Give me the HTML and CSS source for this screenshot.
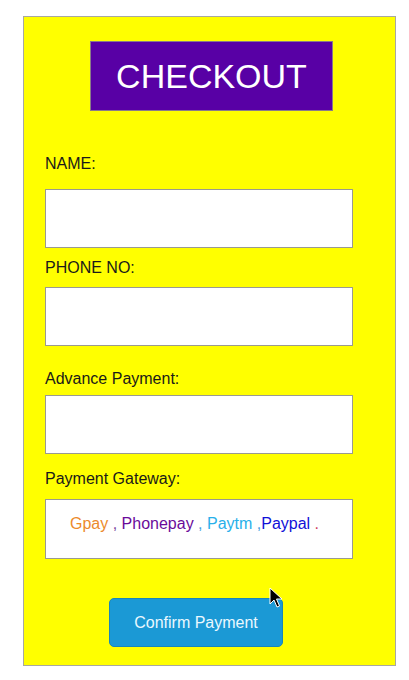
FILE: index.html
```html
<!DOCTYPE html>
<html>
<head>
<meta charset="utf-8">
<link rel="stylesheet" href="styles.css">
</head>
<body>
<div class="page">
  <div class="card">
    <div class="title">CHECKOUT</div>
    <div class="label l-name">NAME:</div>
    <div class="field f-name"></div>
    <div class="label l-phone">PHONE NO:</div>
    <div class="field f-phone"></div>
    <div class="label l-adv">Advance Payment:</div>
    <div class="field f-adv"></div>
    <div class="label l-gw">Payment Gateway:</div>
    <div class="field gateway"><span class="gpay">Gpay</span><span class="sep">&nbsp;, </span><span class="phonepe">Phonepay</span><span class="sep2">&nbsp;, </span><span class="paytm">Paytm</span><span class="sep2">&nbsp;,</span><span class="paypal">Paypal</span><span class="dot">&nbsp;.</span></div>
    <div class="btn-row">
      <button class="confirm">Confirm Payment</button>
      <svg class="cursor" width="14" height="22" viewBox="0 0 14 22"><path d="M1 1 L1 17 L5 13 L8 20 L10.5 19 L7.5 12 L13 12 Z" fill="#000" stroke="#fff" stroke-width="1"/></svg>
    </div>
  </div>
</div>
</body>
</html>
```

FILE: styles.css
```css
html, body {
  margin: 0;
  padding: 0;
  background: #fff;
}
body {
  font-family: "Liberation Sans", Arial, sans-serif;
}
.page {
  padding: 16px 0 0 23px;
}
.card {
  box-sizing: border-box;
  width: 373px;
  height: 650px;
  background: #ffff00;
  border: 1px solid #a8a8a0;
  padding: 24px 0 0 21px;
  display: flex;
  flex-direction: column;
  align-items: flex-start;
}
.title {
  box-sizing: border-box;
  width: 243px;
  height: 70px;
  margin-left: 45px;
  background: #5800a5;
  border: 1px solid #8a7a8a;
  color: #fff;
  font-size: 34px;
  line-height: 68px;
  text-align: center;
}
.label {
  font-size: 16px;
  line-height: 18px;
  height: 18px;
  color: #1a1a1a;
}
.l-name { margin-top: 44px; }
.l-phone { margin-top: 11px; }
.l-adv { margin-top: 24px; }
.l-gw { margin-top: 16px; }
.field {
  box-sizing: border-box;
  width: 308px;
  height: 59px;
  background: #fff;
  border: 1px solid #9a9a90;
}
.f-name { margin-top: 16px; }
.f-phone { margin-top: 10px; }
.f-adv { margin-top: 7px; }
.gateway {
  margin-top: 11px;
  height: 60px;
  font-size: 16px;
  line-height: 18px;
  padding: 15px 0 0 24px;
  white-space: nowrap;
}
.gpay { color: #ec8a2c; }
.sep { color: #7a4aa0; }
.phonepe { color: #6a0a9a; }
.sep2 { color: #4aa0e0; }
.paytm { color: #28b0ea; }
.paypal { color: #1010d8; }
.dot { color: #d04060; }
.btn-row {
  position: relative;
  margin-top: 39px;
  margin-left: 64px;
}
.confirm {
  box-sizing: border-box;
  width: 174px;
  height: 49px;
  background: #1b99d5;
  border: 1px solid #1a86b8;
  border-radius: 5px;
  color: #eaf8ff;
  font-family: "Liberation Sans", Arial, sans-serif;
  font-size: 16px;
  padding: 0;
}
.cursor {
  position: absolute;
  left: 160px;
  top: -11px;
}
```
